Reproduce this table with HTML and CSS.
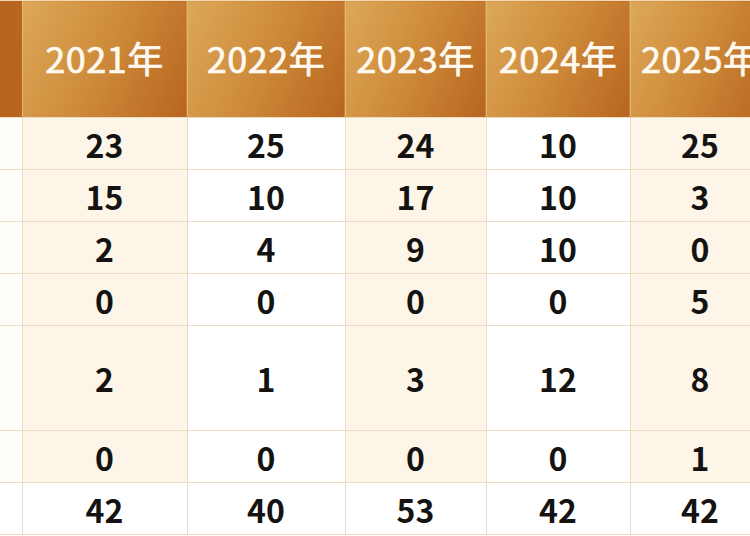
FILE: index.html
```html
<!DOCTYPE html>
<html lang="ja">
<head>
<meta charset="utf-8">
<link rel="stylesheet" href="styles.css">
</head>
<body>
<table class="stats">
  <colgroup>
    <col class="c0"><col class="c1"><col class="c2"><col class="c3"><col class="c4"><col class="c5">
  </colgroup>
  <thead>
    <tr>
      <th></th>
      <th>2021年</th>
      <th>2022年</th>
      <th>2023年</th>
      <th>2024年</th>
      <th>2025年</th>
    </tr>
  </thead>
  <tbody>
    <tr><td></td><td class="alt">23</td><td>25</td><td class="alt">24</td><td>10</td><td class="alt">25</td></tr>
    <tr><td></td><td class="alt">15</td><td>10</td><td class="alt">17</td><td>10</td><td class="alt">3</td></tr>
    <tr><td></td><td class="alt">2</td><td>4</td><td class="alt">9</td><td>10</td><td class="alt">0</td></tr>
    <tr><td></td><td class="alt">0</td><td>0</td><td class="alt">0</td><td>0</td><td class="alt">5</td></tr>
    <tr class="tall"><td></td><td class="alt">2</td><td>1</td><td class="alt">3</td><td>12</td><td class="alt">8</td></tr>
    <tr><td></td><td class="alt">0</td><td>0</td><td class="alt">0</td><td>0</td><td class="alt">1</td></tr>
    <tr class="total"><td></td><td>42</td><td>40</td><td>53</td><td>42</td><td>42</td></tr>
  </tbody>
</table>
</body>
</html>
```

FILE: styles.css
```css
html, body {
  margin: 0;
  padding: 0;
  width: 750px;
  height: 536px;
  overflow: hidden;
  background: #ffffff;
}

.stats {
  border-collapse: collapse;
  table-layout: fixed;
  width: 770px;
  font-family: "Noto Sans CJK JP", "Noto Sans", sans-serif;
}

.c0 { width: 22px; }
.c1 { width: 165px; }
.c2 { width: 158px; }
.c3 { width: 141px; }
.c4 { width: 144px; }
.c5 { width: 140px; }

.stats th {
  box-sizing: border-box;
  height: 117px;
  padding: 0 0 4px 0;
  border-top: 1px solid #f1d9b6;
  border-left: 1px solid #e2b679;
  background: linear-gradient(115deg, #dca858 0%, #cf8d3c 45%, #b8651f 100%);
  color: #fffaf1;
  font-size: 36px;
  font-weight: 400;
  -webkit-text-stroke: 0.7px #fffaf1;
  text-align: center;
  vertical-align: middle;
  white-space: nowrap;
  letter-spacing: 0.5px;
}

.stats th:first-child {
  border-left: none;
  background: #b8651f;
}

.stats td {
  height: 51px;
  padding: 0;
  border: 1px solid #ecdcc2;
  background: #ffffff;
  color: #141312;
  font-size: 32px;
  font-weight: 700;
  text-align: center;
  vertical-align: middle;
  line-height: 1;
}

.stats td:first-child {
  border-left: none;
  background: #fffdf9;
}

.stats td.alt {
  background: #fdf5e8;
}

.stats tr.tall td {
  height: 104px;
}

.stats tr.total td {
  background: #ffffff;
}
```
